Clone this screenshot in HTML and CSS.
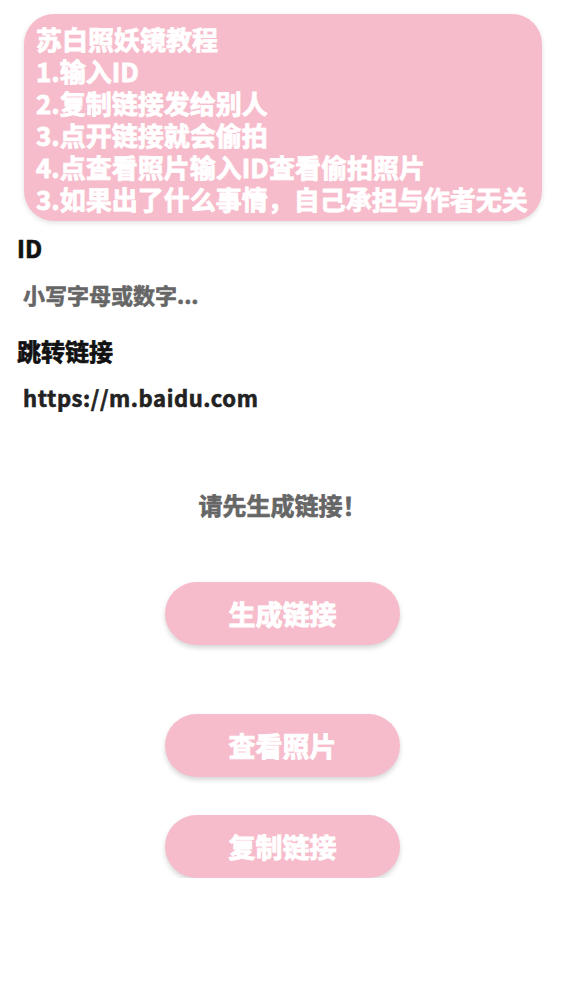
FILE: index.html
```html
<!DOCTYPE html>
<html lang="zh-CN">
<head>
<meta charset="utf-8">
<title>苏白照妖镜</title>
<link rel="stylesheet" href="styles.css">
</head>
<body>
<main class="page">
  <section class="guide">
    <p>苏白照妖镜教程</p>
    <p>1.输入ID</p>
    <p>2.复制链接发给别人</p>
    <p>3.点开链接就会偷拍</p>
    <p>4.点查看照片输入ID查看偷拍照片</p>
    <p>3.如果出了什么事情，自己承担与作者无关</p>
  </section>

  <section class="field field-id">
    <label class="field-label" for="uid">ID</label>
    <input class="field-input" id="uid" type="text" placeholder="小写字母或数字...">
  </section>

  <section class="field field-url">
    <label class="field-label" for="url">跳转链接</label>
    <input class="field-input field-input-url" id="url" type="text" value="https://m.baidu.com">
  </section>

  <p class="status">请先生成链接！</p>

  <div class="actions">
    <button class="btn btn-gen" type="button">生成链接</button>
    <button class="btn btn-view" type="button">查看照片</button>
    <button class="btn btn-copy" type="button">复制链接</button>
  </div>
</main>
</body>
</html>
```

FILE: styles.css
```css
* {
  box-sizing: border-box;
}

html, body {
  margin: 0;
  padding: 0;
  background: #ffffff;
}

body {
  font-family: "Noto Sans CJK SC", "Noto Sans", sans-serif;
  font-weight: 700;
  color: #111111;
}

.page {
  display: flex;
  flex-direction: column;
}

.guide {
  margin: 14px 23px 0 24px;
  padding: 9px 10px 6px 12px;
  background: #f7bccb;
  border-radius: 30px;
  box-shadow: 0 2px 5px rgba(0, 0, 0, 0.12);
  color: #ffffff;
  font-size: 26px;
  line-height: 32px;
  -webkit-text-stroke: 0.8px #ffffff;
}

.guide p {
  margin: 0;
  white-space: nowrap;
}

.field {
  display: flex;
  flex-direction: column;
  padding-left: 17px;
}

.field-id {
  margin-top: 12px;
}

.field-url {
  margin-top: 27px;
}

.field-label {
  font-size: 24px;
  line-height: 30px;
  color: #111111;
  -webkit-text-stroke: 0.7px #111111;
}

.field-input {
  margin-top: 16px;
  margin-left: 6px;
  width: 320px;
  padding: 0;
  border: none;
  outline: none;
  background: transparent;
  font-family: inherit;
  font-weight: 700;
  font-size: 22px;
  line-height: 30px;
  height: 30px;
  color: #222222;
  -webkit-text-stroke: 0.6px #222222;
}

.field-input-url {
  letter-spacing: 0.6px;
}

.field-input::placeholder {
  color: #666666;
  opacity: 1;
  -webkit-text-stroke: 0.6px #666666;
}

.status {
  margin: 78px 0 0;
  text-align: center;
  font-size: 24px;
  line-height: 30px;
  color: #666666;
  -webkit-text-stroke: 0.7px #666666;
}

.actions {
  display: flex;
  flex-direction: column;
  align-items: center;
  margin-top: 62px;
}

.btn {
  width: 235px;
  height: 63px;
  border: none;
  border-radius: 32px;
  background: #f6bccb;
  box-shadow: 0 3px 5px rgba(0, 0, 0, 0.16);
  color: #ffffff;
  font-family: inherit;
  font-weight: 700;
  font-size: 27px;
  padding: 0;
  -webkit-text-stroke: 0.9px #ffffff;
}

.btn-view {
  margin-top: 69px;
}

.btn-copy {
  margin-top: 38px;
}
```
